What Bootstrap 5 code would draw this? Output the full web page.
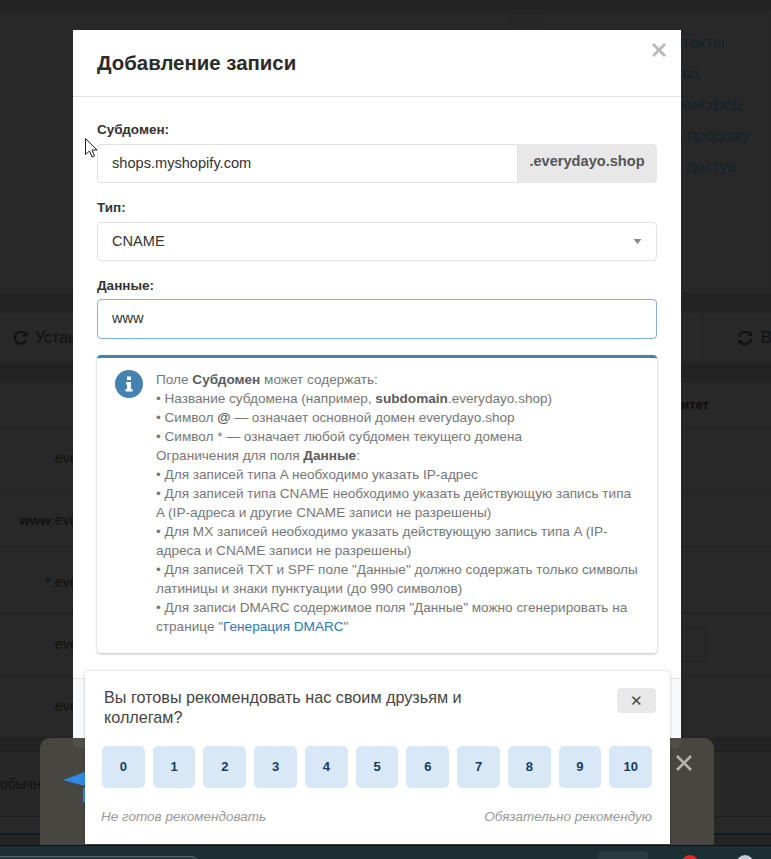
<!DOCTYPE html>
<html lang="ru">
<head>
<meta charset="UTF-8">
<meta name="viewport" content="width=device-width, initial-scale=1.0">
<title>Добавление записи</title>
<link href="https://cdn.jsdelivr.net/npm/bootstrap@5.3.0/dist/css/bootstrap.min.css" rel="stylesheet">
<style>
html, body { height: 100%; }
body { background: #232323; font-family: "Liberation Sans", Arial, sans-serif; overflow: hidden; }
.screen { position: relative; width: 771px; height: 859px; overflow: hidden; color: #101010; font-size: 14px; }

/* dimmed page behind the dialog */
.page-top { height: 283px; margin-top: 10px; gap: 34px; background: #272727; }
.page-panel { background: #282828; border: 1px solid #262626; height: 283px; }
.page-panel-l { width: 510px; }
.page-panel-r { flex: 1; padding: 16px 0 0 36px; }
.page-link { display: block; color: #16222c; font-size: 16px; line-height: 31px; white-space: nowrap; text-decoration: none; }
.page-tools { margin-top: 19px; height: 51px; background: #282828; font-size: 16px; border-top: 1px solid #252525; border-bottom: 1px solid #252525; }
.page-tool-l { padding-left: 13px; gap: 6px; width: 702px; color: #111; }
.page-tool-r { padding-left: 33px; gap: 8px; border-left: 1px solid #252525; color: #111; flex: 1; }
.page-tool-r svg { margin-left: 1px; flex-shrink: 0; }
.page-table { margin-top: 19px; background: #282828; }
.page-row { height: 62px; border-bottom: 1px solid #242424; }
.page-row-head { height: 46px; }
.page-row-dark { border-bottom-color: #1c1c1c; }
.page-cell { width: 155px; flex-shrink: 0; text-align: right; color: #111; font-size: 14.2px; white-space: nowrap; }
.page-cell b { font-size: 13.6px; }
.page-prio { margin-left: auto; margin-right: 62px; font-weight: 700; font-size: 13px; color: #0c0c0c; }
.page-input { margin-left: 500px; width: 52px; height: 35px; flex-shrink: 0; border: 1px solid #242424; border-radius: 4px; }
.page-strip { height: 13px; background: #232323; }
.page-row-plain { height: 66px; background: #272727; border-top: 1px solid #1f1f1f; border-bottom: 1px solid #1f1f1f; }
.page-row-plain span { font-size: 14px; color: #111; }
.page-foot-line { height: 2px; margin-top: 16px; background: #0d1b26; }

/* dialog */
.add-modal { position: absolute; left: 73px; top: 30px; width: 608px; height: 718px; background: #fff; border-radius: 0 0 6px 6px; }
.add-head { height: 67px; padding: 0 24px; border-bottom: 1px solid #e3e3e3; }
.add-title { font-size: 20.4px; font-weight: 700; color: #2b2b2b; margin: 0; }
.add-x { position: absolute; right: 14px; top: 12px; }
.add-body { padding: 24px 24px 0; height: 581px; }
.add-label { display: block; font-size: 13.5px; font-weight: 700; color: #333; line-height: 17px; margin-bottom: 6px; }
.add-group { margin-bottom: 16px; }
.add-input.form-control, .add-input.form-select { height: 39px; border: 1px solid #e2e2e2; border-radius: 4px; padding: 0 14px; font-size: 14.6px; color: #333; box-shadow: none; }
.add-input.form-control { padding-bottom: 2px; }
.add-input.form-select { background-image: url("data:image/svg+xml,%3Csvg xmlns='http://www.w3.org/2000/svg' viewBox='0 0 8 5'%3E%3Cpath fill='%23888' d='M0 0h8L4 5z'/%3E%3C/svg%3E"); background-size: 9px 5px; background-position: right 14px center; }
.add-input.add-focus { height: 40px; margin-top: -1px; border-color: #7fb2d6; }
.add-suffix.input-group-text { width: 140px; justify-content: center; background: #e8e8e8; border: 0; border-radius: 0 4px 4px 0; font-size: 14.6px; font-weight: 700; color: #555; padding: 0 0 3px; }
.add-info { border: 0; border-top: 3px solid #4682b0; border-radius: 4px; box-shadow: 0 1px 3px rgba(0,0,0,.28); height: 298px; padding: 12px 16px 0 18px; gap: 13px; }
.add-info-text { font-size: 13.6px; line-height: 19px; color: #777; }
.add-info-text b { color: #5c5c5c; }
.add-info-text a { color: #2a7ab5; text-decoration: none; }
.add-foot { height: 70px; background: #f8f9fb; border-top: 1px solid #e3e3e3; border-radius: 0 0 6px 6px; }

/* bottom panel and survey */
.promo { position: absolute; left: 40px; top: 738px; width: 674px; height: 107px; background: rgba(74,72,67,.96); border-radius: 10px 10px 0 0; }
.promo-x { position: absolute; right: 22px; top: 17px; }
.promo-arrow { position: absolute; left: 23px; top: 30px; }
.survey { position: absolute; left: 85px; top: 671px; width: 585px; height: 173px; background: #fff; border-radius: 4px 4px 0 0; box-shadow: 0 0 3px rgba(0,0,0,.25); padding: 17px 18px 0 17px; }
.survey-q { width: 372px; margin: 0 0 0 2px; font-size: 16.2px; line-height: 19.5px; color: #444; }
.survey-close.btn { width: 39px; height: 25px; padding: 0; background: #e8e8e8; border: 0; border-radius: 4px; font-size: 15px; line-height: 25px; color: #444; }
.survey-nums { margin-top: 19px; gap: 8px; }
.survey-num.btn { flex: 1; height: 42px; padding: 0; background: #d8e8f6; border: 0; border-radius: 5px; font-size: 13px; font-weight: 700; color: #173c63; }
.survey-hints { margin: 19px 0 0 -1px; font-size: 13.5px; font-style: italic; color: #999; }
.survey-top { margin-right: -4px; }

/* taskbar */
.taskbar { position: absolute; left: 0; right: 0; top: 845px; height: 14px; background: #1c3034; border-top: 1px solid #0c1416; }
.task-pill { position: absolute; left: -6px; top: 10px; width: 204px; height: 12px; background: #2a3e42; border: 1px solid #55666a; border-radius: 6px; }
.task-tab { position: absolute; left: 598px; top: 5px; width: 50px; height: 12px; background: #2a3b3f; border-radius: 4px 4px 0 0; }
.task-dot { position: absolute; width: 18px; height: 18px; border-radius: 50%; top: 9px; }
.task-red { left: 681px; background: #e02a26; }
.task-grey { left: 736px; background: #c3c9d6; }
.cursor { position: absolute; left: 85px; top: 138px; }
</style>
</head>
<body>
<div class="screen">

  <div class="d-flex page-top">
    <div class="page-panel page-panel-l"></div>
    <div class="page-panel page-panel-r">
      <a class="page-link" href="#">Изменить контакты</a>
      <a class="page-link" href="#">Получить права</a>
      <a class="page-link" href="#">Выполнить трансфер</a>
      <a class="page-link" href="#">Выставить на продажу</a>
      <a class="page-link" href="#">Разграничить доступ</a>
    </div>
  </div>

  <div class="d-flex page-tools">
    <div class="d-flex align-items-center flex-shrink-0 page-tool-l">
      <svg width="16" height="16" viewBox="0 0 16 16" fill="none" stroke="#111" stroke-width="2.2"><path d="M13.2 10.5A6 6 0 1 1 12.2 3.6"/><path d="M14.5 1v5.5H9z" fill="#111" stroke="none"/></svg>
      <span>Установить</span>
    </div>
    <div class="d-flex align-items-center page-tool-r">
      <svg width="16" height="16" viewBox="0 0 16 16" fill="none" stroke="#111" stroke-width="2"><path d="M2 7a6 6 0 0 1 10.5-3"/><path d="M14 9a6 6 0 0 1-10.5 3"/><path d="M15 1v5h-5z" fill="#111" stroke="none"/><path d="M1 15v-5h5z" fill="#111" stroke="none"/></svg>
      <span>Все</span>
    </div>
  </div>

  <div class="page-table">
    <div class="d-flex align-items-center page-row page-row-head"><span class="page-prio">Приоритет</span></div>
    <div class="d-flex align-items-center page-row"><div class="page-cell">everydayo.shop</div></div>
    <div class="d-flex align-items-center page-row"><div class="page-cell"><b>www</b>.everydayo.shop</div></div>
    <div class="d-flex align-items-center page-row page-row-dark"><div class="page-cell">*.everydayo.shop</div></div>
    <div class="d-flex align-items-center page-row"><div class="page-cell">everydayo.shop</div><div class="page-input"></div></div>
    <div class="d-flex align-items-center page-row"><div class="page-cell">everydayo.shop</div></div>
    <div class="page-strip"></div>
    <div class="d-flex align-items-center page-row-plain"><span>обычная запись</span></div>
    <div class="page-foot-line"></div>
  </div>

  <div class="add-modal">
    <div class="d-flex align-items-center add-head">
      <h5 class="add-title">Добавление записи</h5>
    </div>
    <svg class="add-x" width="16" height="16" viewBox="0 0 16 16"><path d="M3 1l5 5 5-5 2 2-5 5 5 5-2 2-5-5-5 5-2-2 5-5-5-5z" fill="#b9b9b9"/></svg>
    <div class="add-body">
      <div class="add-group">
        <label class="add-label">Субдомен:</label>
        <div class="input-group">
          <input class="form-control add-input" type="text" value="shops.myshopify.com">
          <span class="input-group-text add-suffix">.everydayo.shop</span>
        </div>
      </div>
      <div class="add-group">
        <label class="add-label">Тип:</label>
        <select class="form-select add-input"><option>CNAME</option></select>
      </div>
      <div class="add-group">
        <label class="add-label">Данные:</label>
        <input class="form-control add-input add-focus" type="text" value="www">
      </div>
      <div class="card flex-row add-info">
        <svg class="flex-shrink-0" width="28" height="28" viewBox="0 0 28 28"><circle cx="14" cy="14" r="14" fill="#4682b0"/><path d="M11 12h5v7h1.500v2.500h-7V19H12v-4.500h-1zM12 6.500h4v3.500h-4z" fill="#fff"/></svg>
        <div class="add-info-text">
          Поле <b>Субдомен</b> может содержать:<br>
          • Название субдомена (например, <b>subdomain</b>.everydayo.shop)<br>
          • Символ <b>@</b> — означает основной домен everydayo.shop<br>
          • Символ * — означает любой субдомен текущего домена<br>
          Ограничения для поля <b>Данные</b>:<br>
          • Для записей типа A необходимо указать IP-адрес<br>
          • Для записей типа CNAME необходимо указать действующую запись типа A (IP-адреса и другие CNAME записи не разрешены)<br>
          • Для MX записей необходимо указать действующую запись типа A (IP-адреса и CNAME записи не разрешены)<br>
          • Для записей TXT и SPF поле "Данные" должно содержать только символы латиницы и знаки пунктуации (до 990 символов)<br>
          • Для записи DMARC содержимое поля "Данные" можно сгенерировать на странице "<a href="#">Генерация DMARC</a>"
        </div>
      </div>
    </div>
    <div class="add-foot"></div>
  </div>

  <div class="promo">
    <svg class="promo-arrow" width="40" height="70" viewBox="0 0 40 70"><path d="M0 12L22 4v14z" fill="#2f8ae6"/><path d="M20 20h2v14h-2z" fill="#2f8ae6"/></svg>
    <svg class="promo-x" width="16" height="16" viewBox="0 0 16 16" fill="none" stroke="#b5b3ae" stroke-width="2.600"><path d="M1 1l14 14M15 1L1 15"/></svg>
  </div>

  <div class="survey">
    <div class="d-flex justify-content-between align-items-start survey-top">
      <p class="survey-q">Вы готовы рекомендовать нас своим друзьям и коллегам?</p>
      <button class="btn survey-close" type="button">✕</button>
    </div>
    <div class="d-flex survey-nums">
      <button class="btn survey-num" type="button">0</button>
      <button class="btn survey-num" type="button">1</button>
      <button class="btn survey-num" type="button">2</button>
      <button class="btn survey-num" type="button">3</button>
      <button class="btn survey-num" type="button">4</button>
      <button class="btn survey-num" type="button">5</button>
      <button class="btn survey-num" type="button">6</button>
      <button class="btn survey-num" type="button">7</button>
      <button class="btn survey-num" type="button">8</button>
      <button class="btn survey-num" type="button">9</button>
      <button class="btn survey-num" type="button">10</button>
    </div>
    <div class="d-flex justify-content-between survey-hints">
      <span>Не готов рекомендовать</span>
      <span>Обязательно рекомендую</span>
    </div>
  </div>

  <div class="taskbar">
    <div class="task-pill"></div>
    <div class="task-tab"></div>
    <div class="task-dot task-red"></div>
    <div class="task-dot task-grey"></div>
  </div>

  <svg class="cursor" width="13" height="20" viewBox="0 0 13 20"><path d="M.5.5v16l4-3.500 2.500 6 2.500-1-2.500-6h5z" fill="#fff" stroke="#222" stroke-width="1"/></svg>
</div>
<script src="https://cdn.jsdelivr.net/npm/bootstrap@5.3.0/dist/js/bootstrap.bundle.min.js"></script>
</body>
</html>
